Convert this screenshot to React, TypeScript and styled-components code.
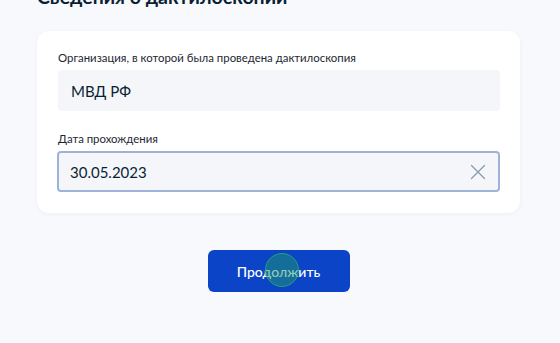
import React from 'react';
import styled, { createGlobalStyle } from 'styled-components';

const GlobalStyle = createGlobalStyle`
  html, body {
    margin: 0;
    padding: 0;
    background: #f8f9fc;
    font-family: 'Lato', 'Noto Sans', sans-serif;
    overflow: hidden;
  }
`;

const Page = styled.div`
  width: 560px;
  height: 343px;
  position: relative;
  overflow: hidden;
  background: #f8f9fc;
`;

const Content = styled.div`
  width: 483px;
  margin-left: 37px;
  margin-top: -17px;
  display: flex;
  flex-direction: column;
`;

const Title = styled.h1`
  margin: 0;
  font-size: 19.5px;
  line-height: 28px;
  font-weight: 700;
  color: #0b1f33;
`;

const Card = styled.div`
  margin-top: 20px;
  background: #ffffff;
  border-radius: 12px;
  box-shadow: 0 1px 4px rgba(30, 60, 120, 0.05);
  padding: 19px 20px 21px 21px;
  display: flex;
  flex-direction: column;
  gap: 20px;
`;

const Field = styled.div`
  display: flex;
  flex-direction: column;
  gap: 4px;
`;

const Label = styled.div`
  font-size: 11.4px;
  line-height: 16px;
  color: #1c2733;
`;

const InputBox = styled.div<{ $focused?: boolean }>`
  height: 41px;
  box-sizing: border-box;
  border-radius: 4px;
  background: #f4f6fa;
  border: 2px solid ${p => (p.$focused ? '#9fb3d9' : '#f4f6fa')};
  margin-left: ${p => (p.$focused ? '-1px' : '0')};
  display: flex;
  align-items: center;
  justify-content: space-between;
  padding: 0 12px 0 11px;
  font-size: 15px;
  color: #0b1f33;
`;

const ClearIcon = styled.svg`
  width: 16px;
  height: 16px;
  flex: none;
`;

const Actions = styled.div`
  display: flex;
  justify-content: center;
  margin-top: 37px;
`;

const Button = styled.button`
  position: relative;
  width: 142px;
  height: 42px;
  border: none;
  border-radius: 6px;
  background: #0b44c6;
  color: #ffffff;
  font-family: 'Lato', 'Noto Sans', sans-serif;
  font-size: 14px;
  font-weight: 500;
  cursor: pointer;
`;

const Tap = styled.span`
  position: absolute;
  left: 57px;
  top: 3px;
  width: 32px;
  height: 32px;
  border-radius: 50%;
  background: rgba(30, 150, 110, 0.5);
  border: 1.5px solid #22a374;
  pointer-events: none;
`;

export default function App() {
  return (
    <Page>
      <GlobalStyle />
      <Content>
        <Title>Сведения о дактилоскопии</Title>
        <Card>
          <Field>
            <Label>Организация, в которой была проведена дактилоскопия</Label>
            <InputBox>МВД РФ</InputBox>
          </Field>
          <Field>
            <Label>Дата прохождения</Label>
            <InputBox $focused>
              30.05.2023
              <ClearIcon viewBox="0 0 16 16" fill="none" stroke="#8d9bb5" strokeWidth="1.4" strokeLinecap="round">
                <path d="M1.5 1.5 L14.5 14.5 M14.5 1.5 L1.5 14.5" />
              </ClearIcon>
            </InputBox>
          </Field>
        </Card>
        <Actions>
          <Button>
            Продолжить
            <Tap />
          </Button>
        </Actions>
      </Content>
    </Page>
  );
}
